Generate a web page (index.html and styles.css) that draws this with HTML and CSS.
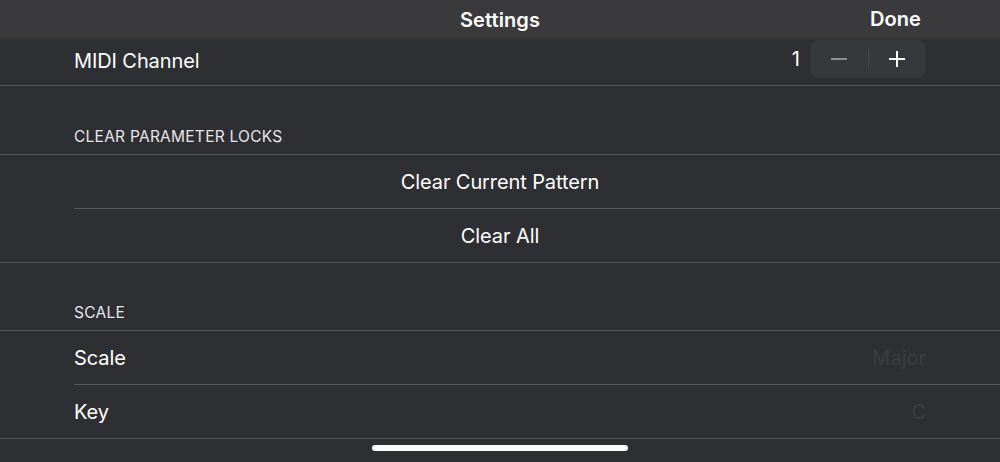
FILE: index.html
```html
<!DOCTYPE html>
<html>
<head>
<meta charset="utf-8">
<link rel="stylesheet" href="styles.css">
</head>
<body>
<div class="screen">
  <header class="nav">
    <div class="nav-title">Settings</div>
    <div class="nav-done">Done</div>
  </header>
  <main class="list">
    <div class="row row-first">
      <span class="label">MIDI Channel</span>
      <div class="stepper-wrap">
        <span class="value">1</span>
        <div class="stepper">
          <span class="step minus"><svg width="18" height="18" viewBox="0 0 18 18"><path d="M1 9h16" stroke="#8e8e93" stroke-width="2"/></svg></span>
          <span class="step-div"></span>
          <span class="step plus"><svg width="18" height="18" viewBox="0 0 18 18"><path d="M1 9h16M9 1v16" stroke="#ffffff" stroke-width="2"/></svg></span>
        </div>
      </div>
    </div>
    <div class="section-header">CLEAR PARAMETER LOCKS</div>
    <div class="group">
      <div class="row center inset-sep"><span class="label">Clear Current Pattern</span></div>
      <div class="row center"><span class="label">Clear All</span></div>
    </div>
    <div class="section-header section-header-second">SCALE</div>
    <div class="group">
      <div class="row inset-sep"><span class="label">Scale</span><span class="detail">Major</span></div>
      <div class="row"><span class="label">Key</span><span class="detail">C</span></div>
    </div>
  </main>
  <div class="home-indicator"></div>
</div>
</body>
</html>
```
FILE: styles.css
```css
* { box-sizing: border-box; }
html, body { margin: 0; padding: 0; }
body {
  width: 1000px;
  height: 462px;
  overflow: hidden;
  background: #2e2f33;
  font-family: Inter, "Noto Sans", "Liberation Sans", sans-serif;
  color: #ffffff;
}
.screen {
  position: relative;
  width: 1000px;
  height: 462px;
}
.nav {
  height: 39px;
  background: #3a3a3d;
  display: flex;
  align-items: center;
  justify-content: center;
  position: relative;
}
.nav-title {
  font-size: 20px;
  font-weight: 600;
  letter-spacing: 0.1px;
}
.nav-done {
  position: absolute;
  right: 79px;
  top: 0;
  height: 39px;
  line-height: 39px;
  font-size: 20px;
  font-weight: 600;
  letter-spacing: 0.1px;
}
.list {
  display: flex;
  flex-direction: column;
}
.row {
  height: 54px;
  display: flex;
  align-items: center;
  justify-content: space-between;
  padding: 0 74px;
  font-size: 20px;
  border-bottom: 1px solid #55565a;
  position: relative;
}
.row-first {
  height: 47px;
  padding-bottom: 2px;
}
.row.center { justify-content: center; }
.group { border-top: 1px solid #55565a; }
.row.inset-sep { border-bottom: none; }
.row.inset-sep::after {
  content: "";
  position: absolute;
  left: 74px;
  right: 0;
  bottom: 0;
  height: 1px;
  background: #55565a;
}
.label { letter-spacing: -0.1px; }
.detail {
  color: #3c3d41;
}
.stepper-wrap {
  display: flex;
  align-items: center;
  gap: 10px;
  margin-top: -5px;
}
.value { font-size: 20px; }
.stepper {
  width: 116px;
  height: 38px;
  border-radius: 9px;
  background: #37383c;
  display: flex;
  align-items: center;
}
.step {
  flex: 1;
  display: flex;
  align-items: center;
  justify-content: center;
}
.step-div {
  width: 1px;
  height: 20px;
  background: #47484c;
}
.section-header {
  height: 68px;
  display: flex;
  align-items: flex-end;
  padding: 0 74px 8px;
  font-size: 15.5px;
  color: #e6e6ea;
  letter-spacing: 0.25px;
}
.section-header-second {
  height: 67px;
}
.home-indicator {
  position: absolute;
  left: 372px;
  top: 445px;
  width: 256px;
  height: 6px;
  border-radius: 3px;
  background: #ffffff;
}
```
